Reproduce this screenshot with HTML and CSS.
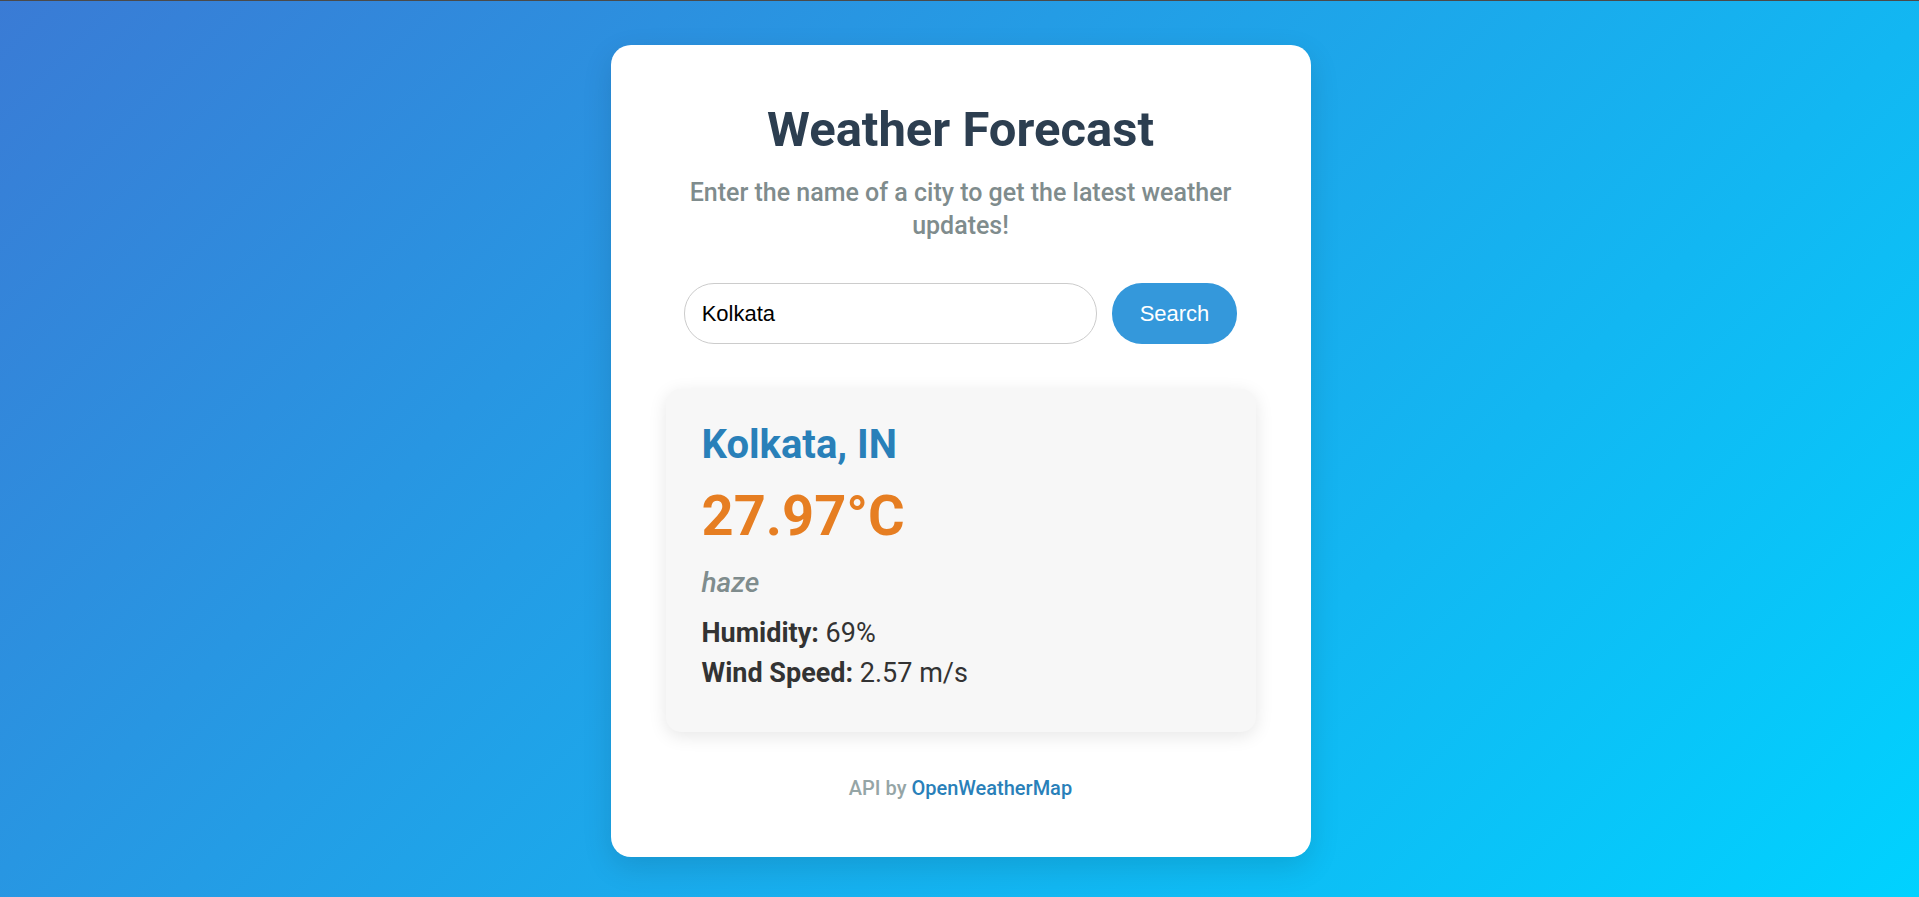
FILE: index.html
```html
<!DOCTYPE html>
<html lang="en">
<head>
<meta charset="UTF-8">
<title>Weather Forecast</title>
<link rel="stylesheet" href="styles.css">
</head>
<body>
<div class="page">
  <div class="card">
    <h1 class="title">Weather Forecast</h1>
    <p class="subtitle">Enter the name of a city to get the latest weather updates!</p>
    <div class="search">
      <input class="search-input" type="text" value="Kolkata">
      <button class="search-btn">Search</button>
    </div>
    <div class="weather">
      <h2 class="city">Kolkata, IN</h2>
      <div class="temp">27.97°C</div>
      <p class="desc">haze</p>
      <p class="stat"><strong>Humidity:</strong> 69%</p>
      <p class="stat"><strong>Wind Speed:</strong> 2.57 m/s</p>
    </div>
    <p class="footer">API by <a class="link" href="#">OpenWeatherMap</a></p>
  </div>
</div>
</body>
</html>
```
FILE: styles.css
```css
* { box-sizing: border-box; }
html, body { margin: 0; padding: 0; }
body {
  font-family: Roboto, "Noto Sans", sans-serif;
  background: linear-gradient(135deg, #3a7bd5 0%, #00d2ff 100%);
  min-height: 100vh;
  border-top: 1px solid #4a4a4a;
}
.page {
  display: flex;
  justify-content: center;
  padding-top: 44px;
  padding-left: 2px;
}
.card {
  width: 700px;
  background: #fff;
  border-radius: 20px;
  box-shadow: 0 10px 30px rgba(0,0,0,0.12);
  padding: 56px 55px 56px;
  text-align: center;
}
.title {
  margin: 0;
  font-size: 49px;
  line-height: 58px;
  font-weight: 700;
  color: #2c3e50;
}
.subtitle {
  margin: 17px 0 0;
  font-size: 25px;
  line-height: 33px;
  font-weight: 500;
  color: #7f8c8d;
}
.search {
  display: flex;
  justify-content: center;
  gap: 15px;
  margin-top: 41px;
}
.search-input {
  width: 70%;
  height: 61px;
  padding: 0 17px;
  font-family: "Liberation Sans", Arial, sans-serif;
  font-size: 22px;
  color: #000;
  border: 1px solid #ccc;
  border-radius: 30px;
  outline: none;
  background: #fff;
}
.search-btn {
  height: 61px;
  padding: 0 28px;
  font-family: "Liberation Sans", Arial, sans-serif;
  font-size: 22px;
  color: #fff;
  background: #3498db;
  border: none;
  border-radius: 30px;
}
.weather {
  margin-top: 45px;
  background: #f7f7f7;
  border-radius: 15px;
  box-shadow: 0 4px 18px rgba(0,0,0,0.1);
  padding: 32px 35px 43px 36px;
  text-align: left;
}
.city {
  margin: 0;
  font-size: 40px;
  line-height: 48px;
  font-weight: 700;
  color: #2980b9;
}
.temp {
  margin-top: 15px;
  font-size: 56px;
  line-height: 64px;
  font-weight: 700;
  color: #e67e22;
}
.desc {
  margin: 17px 0 0;
  font-size: 28px;
  line-height: 36px;
  font-style: italic;
  font-weight: 500;
  color: #7f8c8d;
}
.stat {
  margin: 16px 0 0;
  font-size: 27px;
  line-height: 32px;
  color: #333;
}
.stat + .stat { margin-top: 8px; }
.stat strong { font-weight: 700; }
.footer {
  margin: 43px 0 0;
  font-size: 20px;
  line-height: 26px;
  font-weight: 500;
  color: #95a5a6;
}
.link {
  color: #2980b9;
  text-decoration: none;
}
```
